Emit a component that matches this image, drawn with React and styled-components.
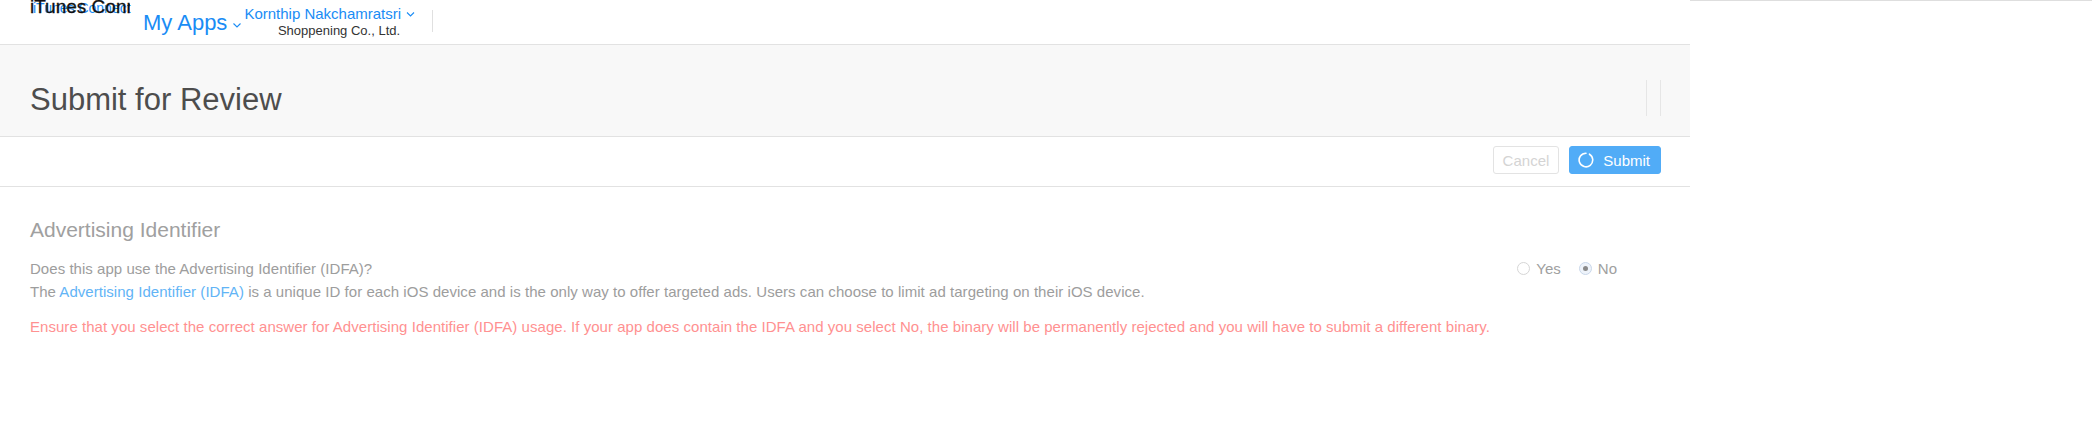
import React from "react";
import styled, { createGlobalStyle } from "styled-components";

// Estilos globales

const GlobalStyle = createGlobalStyle`
  body {
    margin: 0;
    background: #fff;
    font-family: "Liberation Sans", Arial, sans-serif;
  }
`;

const Pagina = styled.div`
  display: flex;
  width: 2092px;
  min-height: 421px;
`;
const Principal = styled.div`
  width: 1690px;
  flex: none;
`;
const Lateral = styled.div`
  flex: 1;
  border-top: 1px solid #dedede;
`;

// Cabecera

const Cabecera = styled.header`
  height: 44px;
  border-bottom: 1px solid #e2e2e2;
  display: flex;
  align-items: flex-start;
  padding-left: 30px;
`;
const Logo = styled.div`
  position: relative;
  width: 104px;
  margin-right: 9px;
`;
const LogoAzul = styled.span`
  display: block;
  padding-left: 3px;
  font-size: 14px;
  line-height: 16px;
  color: #1a8cf5;
  white-space: nowrap;
`;
const LogoNegro = styled.span`
  position: absolute;
  top: -3px;
  left: 0;
  width: 100px;
  overflow: hidden;
  white-space: nowrap;
  font-size: 19px;
  line-height: 20px;
  color: #111;
  -webkit-text-stroke: 0.3px #111;
`;
const MisApps = styled.div`
  display: flex;
  align-items: center;
  margin-top: 10px;
  font-size: 22px;
  line-height: 26px;
  color: #1a8cf5;
`;
const Flecha = styled.svg`
  margin-left: ${(p) => p.$gap}px;
  margin-top: ${(p) => p.$down}px;
  flex: none;
`;
const Usuario = styled.div`
  display: flex;
  flex-direction: column;
  align-items: flex-end;
  margin: 5px 0 0 3px;
`;
const Nombre = styled.div`
  display: flex;
  align-items: center;
  font-size: 15px;
  line-height: 17px;
  color: #1a8cf5;
`;
const Empresa = styled.div`
  margin: 1px 15px 0 0;
  font-size: 13px;
  line-height: 15px;
  color: #333;
`;
const Separador = styled.div`
  width: 1px;
  height: 22px;
  margin: 10px 0 0 17px;
  background: #e0e0e0;
`;

// Banda de titulo

const BandaTitulo = styled.div`
  height: 91px;
  background: #f8f8f8;
  border-bottom: 1px solid #e2e2e2;
  display: flex;
  justify-content: space-between;
  padding: 0 29px 0 30px;
`;
const Titulo = styled.h1`
  margin: 37px 0 0;
  font-size: 31px;
  line-height: 36px;
  font-weight: normal;
  color: #4d4d4d;
`;
const Herramientas = styled.div`
  display: flex;
  gap: 13px;
  margin-top: 35px;
`;
const Divisor = styled.div`
  width: 1px;
  height: 36px;
  background: #e6e6e6;
`;

// Barra de acciones

const BarraAcciones = styled.div`
  box-sizing: border-box;
  height: 50px;
  border-bottom: 1px solid #e2e2e2;
  display: flex;
  justify-content: flex-end;
  align-items: flex-start;
  gap: 10px;
  padding: 9px 29px 0;
`;
const Boton = styled.button`
  box-sizing: border-box;
  height: 28px;
  display: flex;
  align-items: center;
  gap: 9px;
  border-radius: 3px;
  font-family: inherit;
  font-size: 15px;
  padding: ${(p) => (p.$primario ? "0 10px 0 8px" : "0 9px")};
  border: 1px solid ${(p) => (p.$primario ? "#51acf7" : "#e3e3e3")};
  background: ${(p) => (p.$primario ? "#51acf7" : "#fff")};
  color: ${(p) => (p.$primario ? "#fff" : "#d4d4d4")};
`;

// Contenido

const Contenido = styled.section`
  padding: 31px 30px 0;
`;
const Seccion = styled.h2`
  margin: 0;
  font-size: 21px;
  line-height: 24px;
  font-weight: normal;
  color: #a0a0a0;
`;
const FilaPregunta = styled.div`
  display: flex;
  justify-content: space-between;
  align-items: center;
  margin-top: 15px;
  font-size: 15px;
  line-height: 23px;
  letter-spacing: 0.04px;
  color: #9d9d9d;
`;
const Opciones = styled.div`
  display: flex;
  gap: 18px;
  margin-right: 43px;
  letter-spacing: 0;
`;
const Opcion = styled.label`
  display: flex;
  align-items: center;
  gap: 6px;
  color: #a0a0a0;
`;
const Circulo = styled.span`
  box-sizing: border-box;
  width: 13px;
  height: 13px;
  border-radius: 50%;
  display: flex;
  align-items: center;
  justify-content: center;
  border: 1px solid ${(p) => (p.$activo ? "#c9d7ea" : "#d6d6d6")};
  background: ${(p) => (p.$activo ? "#eef3fa" : "#fff")};
`;
const Punto = styled.span`
  width: 5px;
  height: 5px;
  border-radius: 50%;
  background: #8a8a8a;
`;
const Texto = styled.p`
  margin: ${(p) => p.$top || 0}px 0 0;
  font-size: 15px;
  line-height: 23px;
  letter-spacing: 0.04px;
  color: ${(p) => (p.$alerta ? "#ff9191" : "#9d9d9d")};
`;
const Enlace = styled.span`
  color: #62b4f6;
`;

function Chevron({ gap, down, w = 8 }) {
  return (
    <Flecha $gap={gap} $down={down} width={w} height="5" viewBox="0 0 8 5">
      <polyline points="0.5,0.5 4,4 7.5,0.5" fill="none" stroke="#1a8cf5" strokeWidth="1.1" />
    </Flecha>
  );
}

function Radio({ label, activo }) {
  return (
    <Opcion>
      <Circulo $activo={activo}>{activo && <Punto />}</Circulo>
      {label}
    </Opcion>
  );
}

export default function App() {
  return (
    <>
      <GlobalStyle />
      <Pagina>
        <Principal>
          <Cabecera>
            <Logo>
              <LogoAzul>iTunes Connect</LogoAzul>
              <LogoNegro>iTunes Connect</LogoNegro>
            </Logo>
            <MisApps>
              My Apps
              <Chevron gap={6} down={4} />
            </MisApps>
            <Usuario>
              <Nombre>
                Kornthip Nakchamratsri
                <Chevron gap={5} down={1} w={9} />
              </Nombre>
              <Empresa>Shoppening Co., Ltd.</Empresa>
            </Usuario>
            <Separador />
          </Cabecera>

          <BandaTitulo>
            <Titulo>Submit for Review</Titulo>
            <Herramientas>
              <Divisor />
              <Divisor />
            </Herramientas>
          </BandaTitulo>

          <BarraAcciones>
            <Boton type="button">Cancel</Boton>
            <Boton type="button" $primario>
              <svg width="16" height="16" viewBox="0 0 16 16">
                <path d="M11.5 2.2 A6.8 6.8 0 1 1 8 1.2" fill="none" stroke="#fff" strokeWidth="1.6" strokeLinecap="round" />
              </svg>
              Submit
            </Boton>
          </BarraAcciones>

          <Contenido>
            <Seccion>Advertising Identifier</Seccion>
            <FilaPregunta>
              <span>Does this app use the Advertising Identifier (IDFA)?</span>
              <Opciones>
                <Radio label="Yes" />
                <Radio label="No" activo />
              </Opciones>
            </FilaPregunta>
            <Texto>
              The <Enlace>Advertising Identifier (IDFA)</Enlace> is a unique ID for each iOS device and is the only way to offer targeted ads. Users can choose to limit ad targeting on their iOS device.
            </Texto>
            <Texto $top={12} $alerta>
              Ensure that you select the correct answer for Advertising Identifier (IDFA) usage. If your app does contain the IDFA and you select No, the binary will be permanently rejected and you will have to submit a different binary.
            </Texto>
          </Contenido>
        </Principal>
        <Lateral />
      </Pagina>
    </>
  );
}
